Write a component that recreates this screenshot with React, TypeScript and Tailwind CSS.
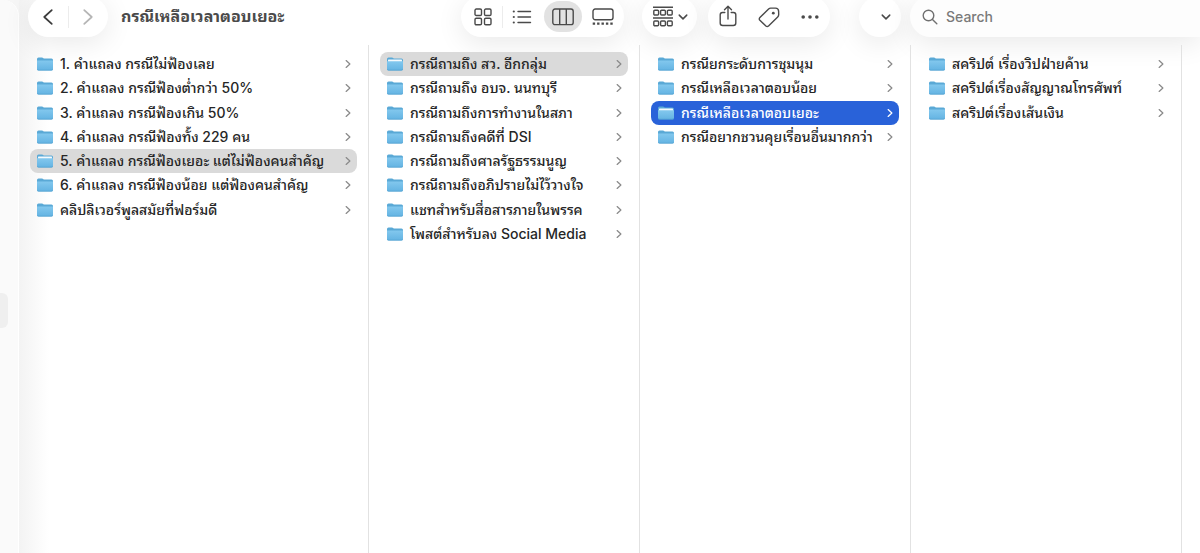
import { useState } from "react";

type ColumnData = {
  label: string;
  items: string[];
  selected: number;
  active?: boolean;
  width: string;
};

const COLUMNS: ColumnData[] = [
  {
    label: "Statements",
    selected: 4,
    width: "w-[349px] pl-[11px]",
    items: [
      "1. คำแถลง กรณีไม่ฟ้องเลย",
      "2. คำแถลง กรณีฟ้องต่ำกว่า 50%",
      "3. คำแถลง กรณีฟ้องเกิน 50%",
      "4. คำแถลง กรณีฟ้องทั้ง 229 คน",
      "5. คำแถลง กรณีฟ้องเยอะ แต่ไม่ฟ้องคนสำคัญ",
      "6. คำแถลง กรณีฟ้องน้อย แต่ฟ้องคนสำคัญ",
      "คลิปลิเวอร์พูลสมัยที่ฟอร์มดี",
    ],
  },
  {
    label: "Questions",
    selected: 0,
    width: "w-[271px] border-l pl-[11px]",
    items: [
      "กรณีถามถึง สว. อีกกลุ่ม",
      "กรณีถามถึง อบจ. นนทบุรี",
      "กรณีถามถึงการทำงานในสภา",
      "กรณีถามถึงคดีที่ DSI",
      "กรณีถามถึงศาลรัฐธรรมนูญ",
      "กรณีถามถึงอภิปรายไม่ไว้วางใจ",
      "แชทสำหรับสื่อสารภายในพรรค",
      "โพสต์สำหรับลง Social Media",
    ],
  },
  {
    label: "Cases",
    selected: 2,
    active: true,
    width: "w-[271px] border-l pl-[11px]",
    items: [
      "กรณียกระดับการชุมนุม",
      "กรณีเหลือเวลาตอบน้อย",
      "กรณีเหลือเวลาตอบเยอะ",
      "กรณีอยากชวนคุยเรื่อนอื่นมากกว่า",
    ],
  },
  {
    label: "Scripts",
    selected: -1,
    width: "w-[271px] border-l pl-[11px]",
    items: ["สคริปต์ เรื่องวิปฝ่ายค้าน", "สคริปต์เรื่องสัญญาณโทรศัพท์", "สคริปต์เรื่องเส้นเงิน"],
  },
];

const PILL = "flex h-[41px] shrink-0 items-center rounded-full bg-white shadow-[0_6px_28px_rgba(0,0,0,0.09)]";

function Folder({ open }: { open: boolean }) {
  return (
    <svg width="16" height="14" viewBox="0 0 16 14" className="shrink-0" aria-hidden="true">
      <defs>
        <linearGradient id="folderFront" x1="0" y1="0" x2="0" y2="1">
          <stop offset="0" stopColor="#83c8ee" />
          <stop offset="1" stopColor="#63b3e2" />
        </linearGradient>
      </defs>
      <path d="M0 2Q0 .5 1.5.5H5Q5.7.5 6.2 1l.5.5H14.5Q16 1.500 16 3V8H0Z" fill="#5aa9d6" />
      {open && <path d="M1 3.200Q1 2.600 1.600 2.600H14.400Q15 2.600 15 3.200V6H1Z" fill="#f4fafd" />}
      <path
        d={open ? "M0 4.200H16V12Q16 13.500 14.500 13.500H1.500Q0 13.500 0 12Z" : "M0 3.400H16V12Q16 13.500 14.500 13.500H1.500Q0 13.500 0 12Z"}
        fill="url(#folderFront)"
      />
      <path d="M.4 12.300Q.6 13.200 1.600 13.200H14.400Q15.400 13.200 15.600 12.300" fill="none" stroke="#4c9ccb" strokeWidth=".6" />
    </svg>
  );
}

function Chevron({ dir, size, className }: { dir: "left" | "right" | "down"; size: number; className: string }) {
  const d = { left: "M11 2.500 5 8l6 5.500", right: "M5 2.500 11 8l-6 5.500", down: "M3 5.500 8 10.500l5-5" }[dir];
  return (
    <svg width={size} height={size} viewBox="0 0 16 16" fill="none" stroke="currentColor" strokeLinecap="round" strokeLinejoin="round" className={className} aria-hidden="true">
      <path d={d} />
    </svg>
  );
}

const ICON = "fill-none stroke-[#4a4a4a] stroke-[1.4]";

function GridIcon() {
  return (
    <svg width="18" height="18" viewBox="0 0 18 18" className={ICON} aria-hidden="true">
      <rect x="1" y="1" width="6.500" height="6.500" rx="1.300" />
      <rect x="10.500" y="1" width="6.500" height="6.500" rx="1.300" />
      <rect x="1" y="10.300" width="6.500" height="6.500" rx="1.300" />
      <rect x="10.500" y="10.300" width="6.500" height="6.500" rx="1.300" />
    </svg>
  );
}

function ListIcon() {
  return (
    <svg width="20" height="16" viewBox="0 0 20 16" className={ICON} strokeLinecap="round" aria-hidden="true">
      <path d="M6 2.500H18.500M6 8H18.500M6 13.500H18.500" />
      <g className="fill-[#4a4a4a] stroke-none">
        <circle cx="1.800" cy="2.500" r="1.100" />
        <circle cx="1.800" cy="8" r="1.100" />
        <circle cx="1.800" cy="13.500" r="1.100" />
      </g>
    </svg>
  );
}

function ColumnsIcon() {
  return (
    <svg width="22" height="18" viewBox="0 0 22 18" className={ICON} aria-hidden="true">
      <rect x=".8" y="1" width="20.400" height="15.600" rx="2.200" />
      <path d="M7.700 1V16.600M14.300 1V16.600" />
    </svg>
  );
}

function GalleryIcon() {
  return (
    <svg width="22" height="18" viewBox="0 0 22 18" className={ICON} aria-hidden="true">
      <rect x="1" y="1" width="20" height="10.700" rx="2.200" />
      <path className="stroke-[2.4]" strokeDasharray="2.4 2" d="M.7 15.600H21.300" />
    </svg>
  );
}

function GroupIcon() {
  return (
    <svg width="20" height="21" viewBox="0 0 20 21" className={ICON} aria-hidden="true">
      <path d="M0 1.200H20M0 12H20" />
      {[0.8, 7.6, 14.4].map((x) => (
        <g key={x}>
          <rect x={x} y="4.200" width="4.800" height="4.800" rx="1" />
          <rect x={x} y="15" width="4.800" height="4.800" rx="1" />
        </g>
      ))}
    </svg>
  );
}

function ShareIcon() {
  return (
    <svg width="18" height="22" viewBox="0 0 18 22" className={ICON} strokeLinecap="round" strokeLinejoin="round" aria-hidden="true">
      <path d="M5.800 7.500H3.500Q1.200 7.500 1.200 9.800V18Q1.200 20.500 3.700 20.500H14.300Q16.800 20.500 16.800 18V9.800Q16.800 7.500 14.500 7.500H12.200M9 14V1.500M5.500 4.700 9 1.200l3.500 3.500" />
    </svg>
  );
}

function TagIcon() {
  return (
    <svg width="22" height="22" viewBox="0 0 22 22" className={ICON} strokeLinejoin="round" aria-hidden="true">
      <path d="M12.700 2.100H17.500Q20.400 2.100 20.600 5L20.700 8.500Q20.700 10 19.700 11L10.500 20Q9.200 21.200 7.900 20L1.900 14.200Q.6 12.900 1.900 11.600L10.600 3Q11.500 2.100 12.700 2.100Z" />
      <circle cx="15.300" cy="7.200" r="1.400" className="fill-[#4a4a4a] stroke-none" />
    </svg>
  );
}

function Column({ data }: { data: ColumnData }) {
  const [selected, setSelected] = useState(data.selected);
  return (
    <section aria-label={data.label} className={`shrink-0 border-[#e2e2e2] pt-[7px] pr-[11px] ${data.width}`}>
      <ul className="grid h-[194px] grid-cols-1 grid-rows-8">
        {data.items.map((name, i) => {
          const on = i === selected;
          const look = on ? (data.active ? "bg-[#2962d9] text-white" : "bg-[#dadada] text-[#262626]") : "text-[#262626]";
          return (
            <li key={name} className="min-h-0">
              <button
                type="button"
                aria-pressed={on}
                onClick={() => setSelected(i)}
                className={`flex h-full w-full items-center gap-[7px] rounded-lg pr-1 pl-[7px] text-left text-sm leading-[22px] font-medium whitespace-nowrap ${look}`}
              >
                <Folder open={on} />
                <span className="min-w-0 flex-1">{name}</span>
                <Chevron dir="right" size={10} className={`shrink-0 stroke-2 ${on && data.active ? "text-white" : "text-[#8a8a8a]"}`} />
              </button>
            </li>
          );
        })}
      </ul>
    </section>
  );
}

export default function App() {
  return (
    <div className="flex h-screen overflow-hidden bg-[#f6f6f6] font-['Inter','Noto_Sans_Thai_Looped','Noto_Sans',sans-serif]">
      <aside aria-label="Sidebar" className="flex w-[19px] shrink-0 items-center rounded-tr-2xl border-r border-white bg-[#fafafa] pt-[68px]">
        <div className="h-[35px] w-2 rounded-r-md bg-[#efefef]" />
      </aside>
      <main className="flex min-w-0 flex-1 flex-col bg-[linear-gradient(to_right,#f3f3f3,#ffffff_30px)]">
        <header className="-mt-1 flex h-[49px] shrink-0 items-start pl-[9px]">
          <nav aria-label="History" className={`${PILL} w-20`}>
            <button type="button" aria-label="Back" className="flex flex-1 justify-center text-[#3c3c3c]">
              <Chevron dir="left" size={20} className="stroke-[1.4]" />
            </button>
            <span className="h-[22px] w-px bg-[#ececec]" />
            <button type="button" aria-label="Forward" className="flex flex-1 justify-center text-[#b5b5b5]">
              <Chevron dir="right" size={20} className="stroke-[1.4]" />
            </button>
          </nav>
          <h1 className="w-[353px] shrink-0 pl-[13px] text-base leading-[41px] font-bold whitespace-nowrap text-[#4a4a4a]">กรณีเหลือเวลาตอบเยอะ</h1>
          <div role="group" aria-label="View" className={`${PILL} w-[163px]`}>
            <button type="button" aria-label="Icons" className="flex w-[41px] justify-center pl-[3px]"><GridIcon /></button>
            <span className="h-[22px] w-px bg-[#ececec]" />
            <button type="button" aria-label="List" className="flex w-[41px] justify-center pr-1"><ListIcon /></button>
            <button type="button" aria-label="Columns" aria-pressed="true" className="flex h-[31px] w-[38px] items-center justify-center rounded-full bg-[#e2e2e2]"><ColumnsIcon /></button>
            <button type="button" aria-label="Gallery" className="flex flex-1 justify-center"><GalleryIcon /></button>
          </div>
          <button type="button" aria-label="Group by" className={`${PILL} ml-[18px] w-[55px] gap-1 pl-[11px]`}>
            <GroupIcon />
            <Chevron dir="down" size={12} className="stroke-2 text-[#4a4a4a]" />
          </button>
          <div role="group" aria-label="Actions" className={`${PILL} ml-[11px] w-[122px]`}>
            <button type="button" aria-label="Share" className="flex w-10 justify-center pb-0.5"><ShareIcon /></button>
            <button type="button" aria-label="Tags" className="flex w-[41px] justify-center"><TagIcon /></button>
            <button type="button" aria-label="More" className="flex w-[41px] justify-center">
              <svg width="18" height="4" viewBox="0 0 18 4" className="fill-[#4a4a4a]" aria-hidden="true">
                <circle cx="2.200" cy="2" r="1.800" />
                <circle cx="9" cy="2" r="1.800" />
                <circle cx="15.800" cy="2" r="1.800" />
              </svg>
            </button>
          </div>
          <button type="button" aria-label="Options" className={`${PILL} ml-[29px] w-[42px] justify-end pr-[9px]`}>
            <Chevron dir="down" size={12} className="stroke-2 text-[#4a4a4a]" />
          </button>
          <div className="ml-[9px] flex h-[41px] min-w-0 flex-1 items-center gap-2 rounded-l-full bg-[#fdfdfd] pl-3 shadow-[0_6px_28px_rgba(0,0,0,0.09)]">
            <svg width="16" height="16" viewBox="0 0 16 16" className="shrink-0 fill-none stroke-[#707070] stroke-[1.4]" strokeLinecap="round" aria-hidden="true">
              <circle cx="6.500" cy="6.500" r="5.300" />
              <path d="M10.500 10.500 14.800 14.800" />
            </svg>
            <input type="search" aria-label="Search" placeholder="Search" className="min-w-0 flex-1 bg-transparent text-sm font-medium outline-none placeholder:text-[#7a7a7a]" />
          </div>
        </header>
        <div className="flex min-h-0 flex-1">
          {COLUMNS.map((c) => (
            <Column key={c.label} data={c} />
          ))}
          <div className="flex-1 border-l border-[#e2e2e2]" />
        </div>
      </main>
    </div>
  );
}
